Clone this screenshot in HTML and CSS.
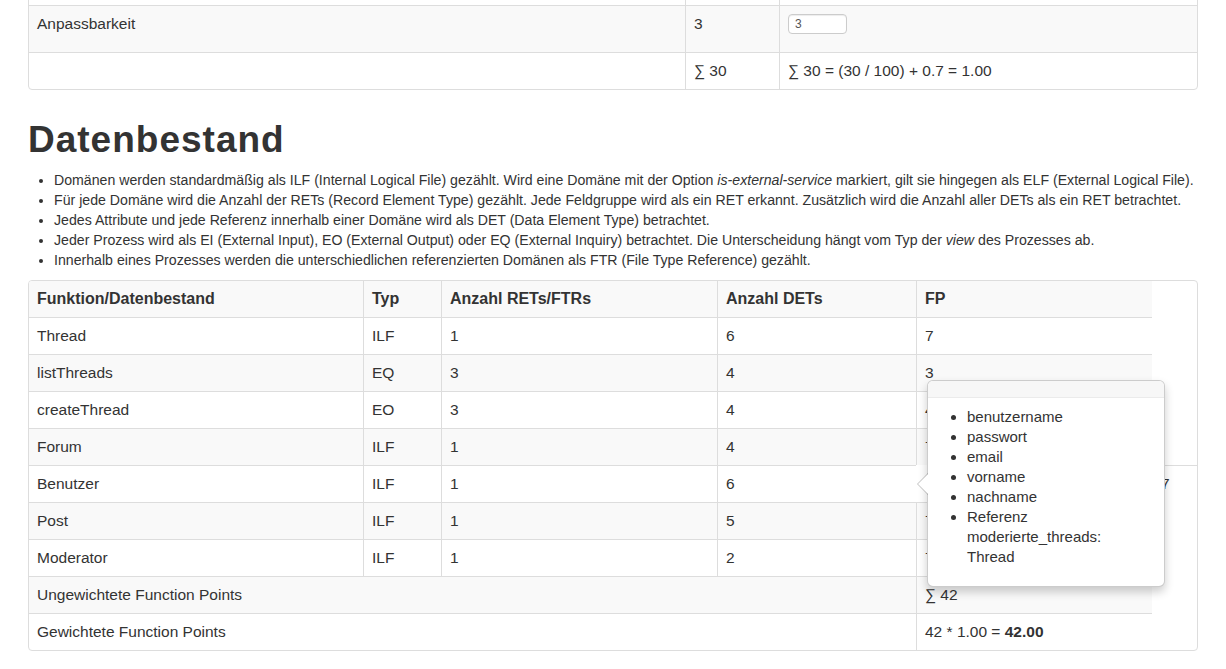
FILE: index.html
```html
<!DOCTYPE html>
<html lang="de">
<head>
<meta charset="utf-8">
<title>Datenbestand</title>
<link rel="stylesheet" href="styles.css">
</head>
<body>
<div class="page">
  <div class="panel panel-top">
    <table class="grid">
      <colgroup><col class="tc1"><col class="tc2"><col class="tc3"></colgroup>
      <tr><td>&nbsp;</td><td></td><td></td></tr>
      <tr class="odd"><td>Anpassbarkeit</td><td>3</td><td><input class="num" type="text" value="3"></td></tr>
      <tr><td></td><td>∑ 30</td><td>∑ 30 = (30 / 100) + 0.7 = 1.00</td></tr>
    </table>
  </div>

  <h1 class="title">Datenbestand</h1>
  <ul class="notes">
    <li>Domänen werden standardmäßig als ILF (Internal Logical File) gezählt. Wird eine Domäne mit der Option <em>is-external-service</em> markiert, gilt sie hingegen als ELF (External Logical File).</li>
    <li>Für jede Domäne wird die Anzahl der RETs (Record Element Type) gezählt. Jede Feldgruppe wird als ein RET erkannt. Zusätzlich wird die Anzahl aller DETs als ein RET betrachtet.</li>
    <li>Jedes Attribute und jede Referenz innerhalb einer Domäne wird als DET (Data Element Type) betrachtet.</li>
    <li>Jeder Prozess wird als EI (External Input), EO (External Output) oder EQ (External Inquiry) betrachtet. Die Unterscheidung hängt vom Typ der <em>view</em> des Prozesses ab.</li>
    <li>Innerhalb eines Prozesses werden die unterschiedlichen referenzierten Domänen als FTR (File Type Reference) gezählt.</li>
  </ul>

  <div class="panel panel-data">
    <table class="grid">
      <colgroup><col class="dc1"><col class="dc2"><col class="dc3"><col class="dc4"><col class="dc5"><col class="dc6"></colgroup>
      <tr class="odd"><th>Funktion/Datenbestand</th><th>Typ</th><th>Anzahl RETs/FTRs</th><th>Anzahl DETs</th><th>FP</th></tr>
      <tr><td>Thread</td><td>ILF</td><td>1</td><td>6</td><td>7</td></tr>
      <tr class="odd"><td>listThreads</td><td>EQ</td><td>3</td><td>4</td><td>3</td></tr>
      <tr><td>createThread</td><td>EO</td><td>3</td><td>4</td><td>4</td></tr>
      <tr class="odd"><td>Forum</td><td>ILF</td><td>1</td><td>4</td><td>7</td></tr>
      <tr><td>Benutzer</td><td>ILF</td><td>1</td><td>6</td><td class="slot"></td><td>7</td></tr>
      <tr class="odd"><td>Post</td><td>ILF</td><td>1</td><td>5</td><td>7</td></tr>
      <tr><td>Moderator</td><td>ILF</td><td>1</td><td>2</td><td>7</td></tr>
      <tr class="odd"><td colspan="4">Ungewichtete Function Points</td><td>∑ 42</td></tr>
      <tr><td colspan="4">Gewichtete Function Points</td><td>42 * 1.00 = <strong>42.00</strong></td></tr>
    </table>

    <div class="popover">
      <div class="arrow"></div>
      <div class="popover-title"></div>
      <div class="popover-content">
        <ul class="attrs">
          <li>benutzername</li>
          <li>passwort</li>
          <li>email</li>
          <li>vorname</li>
          <li>nachname</li>
          <li>Referenz moderierte_threads: Thread</li>
        </ul>
      </div>
    </div>
  </div>
</div>
</body>
</html>
```

FILE: styles.css
```css
* { box-sizing: border-box; }

html, body {
  margin: 0;
  background: #fff;
}

body {
  font-family: "Liberation Sans", Arial, Helvetica, sans-serif;
  font-size: 14px;
  line-height: 20px;
  color: #333;
}

.page {
  padding: 0 28px;
}

.panel {
  position: relative;
  border: 1px solid #ddd;
  border-radius: 4px;
  margin-bottom: 20px;
  overflow: hidden;
}

.panel-top {
  margin-top: -32px;
}

.grid {
  width: 100%;
  border-collapse: separate;
  border-spacing: 0;
  table-layout: fixed;
  font-size: 15.5px;
}

.grid td,
.grid th {
  padding: 8px;
  line-height: 20px;
  vertical-align: top;
  text-align: left;
  border-top: 1px solid #ddd;
  border-left: 1px solid #ddd;
}

.grid th {
  font-weight: bold;
  font-size: 16px;
}

.grid tr:first-child > td,
.grid tr:first-child > th { border-top: 0; }

.grid tr > td:first-child,
.grid tr > th:first-child { border-left: 0; }

.grid tr.odd > td,
.grid tr.odd > th { background: #f9f9f9; }

.grid td.slot {
  border-top: 0;
  border-left: 0;
}

.tc1 { width: 656px; }
.tc2 { width: 94px; }

.dc1 { width: 334px; }
.dc2 { width: 78px; }
.dc3 { width: 276px; }
.dc4 { width: 199px; }
.dc5 { width: 236px; }

.num {
  display: block;
  width: 59px;
  height: 20px;
  margin: 0 0 10px;
  padding: 0 6px;
  border: 1px solid #ccc;
  border-radius: 4px;
  background: #fff;
  box-shadow: inset 0 1px 1px rgba(0, 0, 0, 0.075);
  font-family: "Liberation Sans", Arial, sans-serif;
  font-size: 12px;
  color: #555;
}

.title {
  margin: 30px 0 10px;
  font-size: 37px;
  line-height: 40px;
  letter-spacing: 1px;
  font-weight: bold;
  color: #333;
}

.notes {
  margin: 0 0 10px;
  padding-left: 26px;
  font-size: 14.15px;
}

.popover {
  position: absolute;
  left: 898px;
  top: 99px;
  width: 238px;
  background: #fff;
  border: 1px solid rgba(0, 0, 0, 0.2);
  border-radius: 6px;
  box-shadow: 0 5px 10px rgba(0, 0, 0, 0.2);
  font-size: 15px;
  line-height: 20px;
  color: #333;
}

.popover-title {
  height: 17px;
  background: #f7f7f7;
  border-bottom: 1px solid #ebebeb;
  border-radius: 5px 5px 0 0;
}

.popover-content {
  padding: 9px 14px;
}

.attrs {
  margin: 0 0 10px;
  padding-left: 25px;
}

.arrow {
  position: absolute;
  top: 50%;
  left: -11px;
  margin-top: -11px;
  width: 0;
  height: 0;
  border-style: solid;
  border-width: 11px 11px 11px 0;
  border-color: transparent rgba(0, 0, 0, 0.25) transparent transparent;
}

.arrow::after {
  content: "";
  position: absolute;
  left: 1px;
  top: -10px;
  width: 0;
  height: 0;
  border-style: solid;
  border-width: 10px 10px 10px 0;
  border-color: transparent #fff transparent transparent;
}
```
